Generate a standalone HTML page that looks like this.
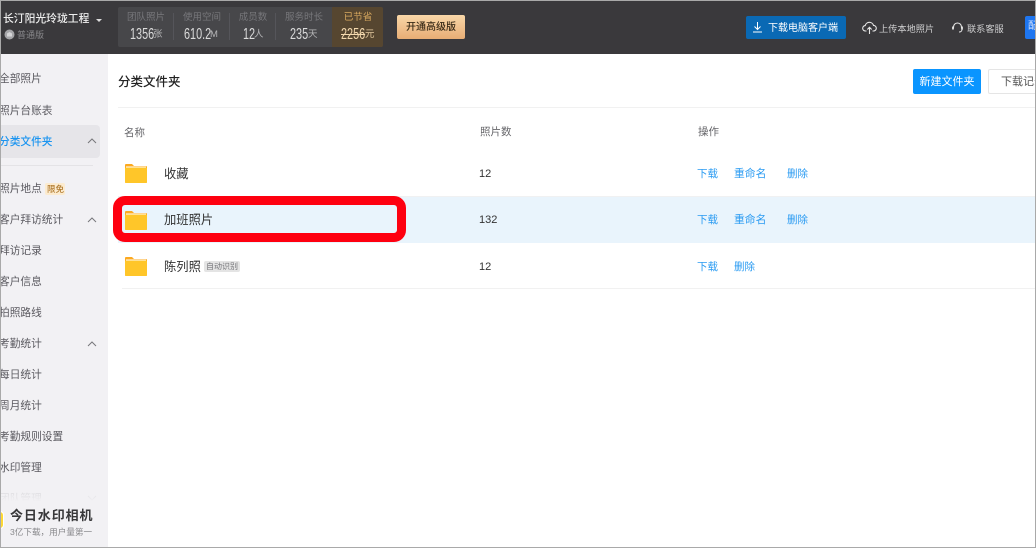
<!DOCTYPE html>
<html><head><meta charset="utf-8">
<style>
*{box-sizing:border-box;margin:0;padding:0}
html,body{width:1036px;height:548px;overflow:hidden;background:#fff}
body{position:relative;font-family:"Liberation Sans","Noto Sans CJK SC",sans-serif}
.t{position:absolute;white-space:nowrap;line-height:16px}
.b{position:absolute}
.s{font-size:10.7px;color:#5b5a60}
.lb{font-size:9.500px;color:#77777b;text-align:center;width:60px}
.d{font-size:15.500px;color:#dcdcdc;transform:scaleX(.7);transform-origin:0 50%}
.u{font-size:9.500px;color:#b5b5b7}
.l{font-size:10.500px;color:#2a9bf2}
.h{font-size:10.500px;color:#66666a}
.n{font-size:11px;color:#333}
.sep{position:absolute;width:1px;height:27px;top:13px;background:#55555a}
</style></head><body>
<!-- header -->
<div class="b" style="left:0;top:0;width:1036px;height:54px;background:#3a393c"></div>
<div class="t" style="left:3px;top:11px;font-size:10.800px;color:#eee;font-weight:500">长汀阳光玲珑工程</div>
<div class="b" style="left:96px;top:19px;border:3px solid transparent;border-top:3px solid #ddd;width:0;height:0"></div>
<svg class="b" style="left:4px;top:29px" width="11" height="11" viewBox="0 0 11 11"><circle cx="5.500" cy="5.500" r="5" fill="#a5a5a8"/><path d="M3 4.500l2.500-1.500L8 4.500V7.500H3z" fill="#d5d5d7"/></svg>
<div class="t" style="left:17px;top:27px;font-size:9px;color:#88888b">普通版</div>

<div class="b" style="left:118px;top:7px;width:265px;height:40px;background:#47474a;border-radius:2px"></div>
<div class="b" style="left:332px;top:7px;width:51px;height:40px;background:#564630;border-radius:0 2px 2px 0"></div>
<div class="sep" style="left:173px"></div><div class="sep" style="left:229px"></div><div class="sep" style="left:275px"></div>
<div class="t lb" style="left:116px;top:10px">团队照片</div>
<div class="t lb" style="left:172px;top:10px">使用空间</div>
<div class="t lb" style="left:223px;top:10px">成员数</div>
<div class="t lb" style="left:274px;top:10px">服务时长</div>
<div class="t lb" style="left:328px;top:10px;color:#d9a95f">已节省</div>
<div class="t d" style="left:130px;top:27px">1356</div><div class="t u" style="left:153px;top:27px">张</div>
<div class="t d" style="left:184px;top:27px">610.2</div><div class="t u" style="left:210px;top:27px">M</div>
<div class="t d" style="left:243px;top:27px">12</div><div class="t u" style="left:254px;top:27px">人</div>
<div class="t d" style="left:290px;top:27px">235</div><div class="t u" style="left:308px;top:27px">天</div>
<div class="t d" style="left:341px;top:27px;color:#f4d9ae;text-decoration:line-through">2256</div><div class="t u" style="left:365px;top:27px;color:#e6cba0">元</div>
<div class="b" style="left:397px;top:15px;width:68px;height:24px;border-radius:2px;background:linear-gradient(#f8d7a8,#e8ad75)"></div>
<div class="t" style="left:397px;top:20px;width:68px;text-align:center;font-size:10px;color:#3a2c18;font-weight:500">开通高级版</div>

<div class="b" style="left:746px;top:16px;width:100px;height:23px;background:#0a69b4;border-radius:2px"></div>
<svg class="b" style="left:751px;top:21px" width="13" height="13" viewBox="0 0 13 13" fill="none" stroke="#fff" stroke-width="1"><path d="M6.500 1v7M3.500 5.500l3 3 3-3M2 11h9"/></svg>
<div class="t" style="left:768px;top:21px;font-size:10px;color:#fff">下载电脑客户端</div>
<svg class="b" style="left:862px;top:20px" width="15" height="15" viewBox="0 0 15 15" fill="none" stroke="#e6e6e6" stroke-width="1.100"><path d="M4.500 11H3.500a2.700 2.700 0 0 1-.3-5.400 4.300 4.300 0 0 1 8.300-.2 2.800 2.800 0 0 1 0 5.600h-1M7.500 14V7.500M5.300 9.500l2.200-2.200 2.200 2.200"/></svg>
<div class="t" style="left:879px;top:21px;font-size:9.200px;color:#cfcfd0">上传本地照片</div>
<svg class="b" style="left:951px;top:21px" width="13" height="13" viewBox="0 0 13 13" fill="none" stroke="#e6e6e6"><path d="M2.500 7V6a4 4 0 0 1 8 0v1" stroke-width="1.100"/><path d="M2 5.500v3M11 5.500v3" stroke-width="1.800"/><path d="M11 8.500c0 1.500-1.200 2.500-3 2.500" stroke-width="1"/></svg>
<div class="t" style="left:967px;top:21px;font-size:9.200px;color:#cfcfd0">联系客服</div>
<div class="b" style="left:1025px;top:16px;width:11px;height:23px;background:#1e76f0;border-radius:2px 0 0 2px;overflow:hidden"><span class="t" style="left:3px;top:3px;font-size:10px;color:#cfe0fb">配</span></div>

<!-- sidebar -->
<div class="b" style="left:0;top:54px;width:108px;height:494px;background:#f2f1f4"></div>
<div class="b" style="left:0;top:125px;width:100px;height:33px;background:#e6e5e9;border-radius:0 4px 4px 0"></div>
<div class="b" style="left:0;top:165px;width:93px;height:1px;background:#e4e3e6"></div>
<div class="t s" style="left:-1px;top:71px">全部照片</div>
<div class="t s" style="left:-1px;top:103px">照片台账表</div>
<div class="t s" style="left:-1px;top:134px;color:#1a94f0;font-weight:500">分类文件夹</div>
<div class="t s" style="left:-1px;top:181px">照片地点</div>
<div class="b" style="left:45px;top:183px;width:20px;height:12px;background:#fcebcf;border-radius:2px"></div>
<div class="t" style="left:47px;top:181px;font-size:8.500px;color:#b07a2e;font-weight:500">限免</div>
<div class="t s" style="left:-1px;top:212px">客户拜访统计</div>
<div class="t s" style="left:-1px;top:243px">拜访记录</div>
<div class="t s" style="left:-1px;top:274px">客户信息</div>
<div class="t s" style="left:-1px;top:305px">拍照路线</div>
<div class="t s" style="left:-1px;top:336px">考勤统计</div>
<div class="t s" style="left:-1px;top:367px">每日统计</div>
<div class="t s" style="left:-1px;top:398px">周月统计</div>
<div class="t s" style="left:-1px;top:429px">考勤规则设置</div>
<div class="t s" style="left:-1px;top:460px">水印管理</div>
<div class="t s" style="left:-1px;top:491px;opacity:.3">团队管理</div>
<svg class="b" style="left:86px;top:137px" width="12" height="8" fill="none" stroke="#77777b"><path d="M2 6l4-4 4 4"/></svg>
<svg class="b" style="left:86px;top:216px" width="12" height="8" fill="none" stroke="#77777b"><path d="M2 6l4-4 4 4"/></svg>
<svg class="b" style="left:86px;top:340px" width="12" height="8" fill="none" stroke="#77777b"><path d="M2 6l4-4 4 4"/></svg>
<svg class="b" style="left:86px;top:494px;opacity:.3" width="12" height="8" fill="none" stroke="#77777b"><path d="M2 2l4 4 4-4"/></svg>
<div class="b" style="left:0;top:490px;width:108px;height:58px;background:linear-gradient(rgba(242,241,244,.4),#f2f1f4 20%)"></div>
<div class="b" style="left:-12px;top:511px;width:16px;height:18px;background:#fdd835;border-radius:4px;border:1px solid #fff"></div>
<div class="t" style="left:10px;top:508px;font-size:13px;color:#38383a;font-weight:700;letter-spacing:.9px">今日水印相机</div>
<div class="t" style="left:10px;top:524px;font-size:8.600px;color:#88888b">3亿下载，用户量第一</div>

<!-- main -->
<div class="t" style="left:118px;top:74px;font-size:12.500px;color:#222;font-weight:500">分类文件夹</div>
<div class="b" style="left:913px;top:69px;width:68px;height:25px;background:#0a95ff;border-radius:2px"></div>
<div class="t" style="left:913px;top:74px;width:68px;text-align:center;font-size:11px;color:#fff">新建文件夹</div>
<div class="b" style="left:988px;top:69px;width:60px;height:25px;background:#fff;border:1px solid #e5e5e5;border-radius:2px"></div>
<div class="t" style="left:1001px;top:74px;font-size:11px;color:#555">下载记录</div>
<div class="b" style="left:118px;top:107px;width:918px;height:1px;background:#f1f1f1"></div>

<div class="t h" style="left:124px;top:125px">名称</div>
<div class="t h" style="left:480px;top:124px">照片数</div>
<div class="t h" style="left:698px;top:124px">操作</div>

<div class="b" style="left:118px;top:196px;width:918px;height:47px;background:#e9f4fc"></div>
<div class="b" style="left:118px;top:196px;width:918px;height:1px;background:#f0f1f2"></div>
<div class="b" style="left:122px;top:288px;width:914px;height:1px;background:#f1f1f1"></div>

<svg width="0" height="0" style="position:absolute"><defs><g id="f"><path d="M0 2a1 1 0 0 1 1-1h6l2 2h12a1 1 0 0 1 1 1v15a1 1 0 0 1-1 1H1a1 1 0 0 1-1-1z" fill="#fca91f"/><rect x="1" y="3.500" width="20" height="1" fill="#fff"/><rect x="0" y="4.500" width="22" height="15.500" rx="1" fill="#ffc629"/></g></defs></svg>
<svg class="b" style="left:125px;top:163px" width="22" height="21"><use href="#f"/></svg>
<svg class="b" style="left:125px;top:210px" width="22" height="21"><use href="#f"/></svg>
<svg class="b" style="left:125px;top:256px" width="22" height="21"><use href="#f"/></svg>

<div class="t n" style="left:164px;top:166px;font-size:12.300px">收藏</div>
<div class="t n" style="left:164px;top:212px;font-size:12.300px">加班照片</div>
<div class="t n" style="left:164px;top:259px;font-size:12.300px">陈列照</div>
<div class="b" style="left:204px;top:261px;width:36px;height:11px;background:#e4e4e4;border-radius:2px"></div>
<div class="t" style="left:206px;top:259px;font-size:8px;color:#77777b">自动识别</div>

<div class="t n" style="left:479px;top:166px">12</div>
<div class="t n" style="left:479px;top:212px">132</div>
<div class="t n" style="left:479px;top:259px">12</div>

<div class="t l" style="left:697px;top:166px">下载</div>
<div class="t l" style="left:734px;top:166px;font-size:10.800px">重命名</div>
<div class="t l" style="left:787px;top:166px">删除</div>
<div class="t l" style="left:697px;top:212px">下载</div>
<div class="t l" style="left:734px;top:212px;font-size:10.800px">重命名</div>
<div class="t l" style="left:787px;top:212px">删除</div>
<div class="t l" style="left:697px;top:259px">下载</div>
<div class="t l" style="left:734px;top:259px">删除</div>

<!-- red annotation -->
<div class="b" style="left:113px;top:196px;width:293px;height:46px;border:9px solid #fe0010;border-radius:12px"></div>

<!-- frame -->
<div class="b" style="left:0;top:0;width:1036px;height:1px;background:#a9a9a9"></div>
<div class="b" style="left:0;top:547px;width:1036px;height:1px;background:#a9a9a9"></div>
<div class="b" style="left:0;top:0;width:1px;height:548px;background:#a9a9a9"></div>
<div class="b" style="left:1035px;top:0;width:1px;height:548px;background:#a9a9a9"></div>
</body></html>
